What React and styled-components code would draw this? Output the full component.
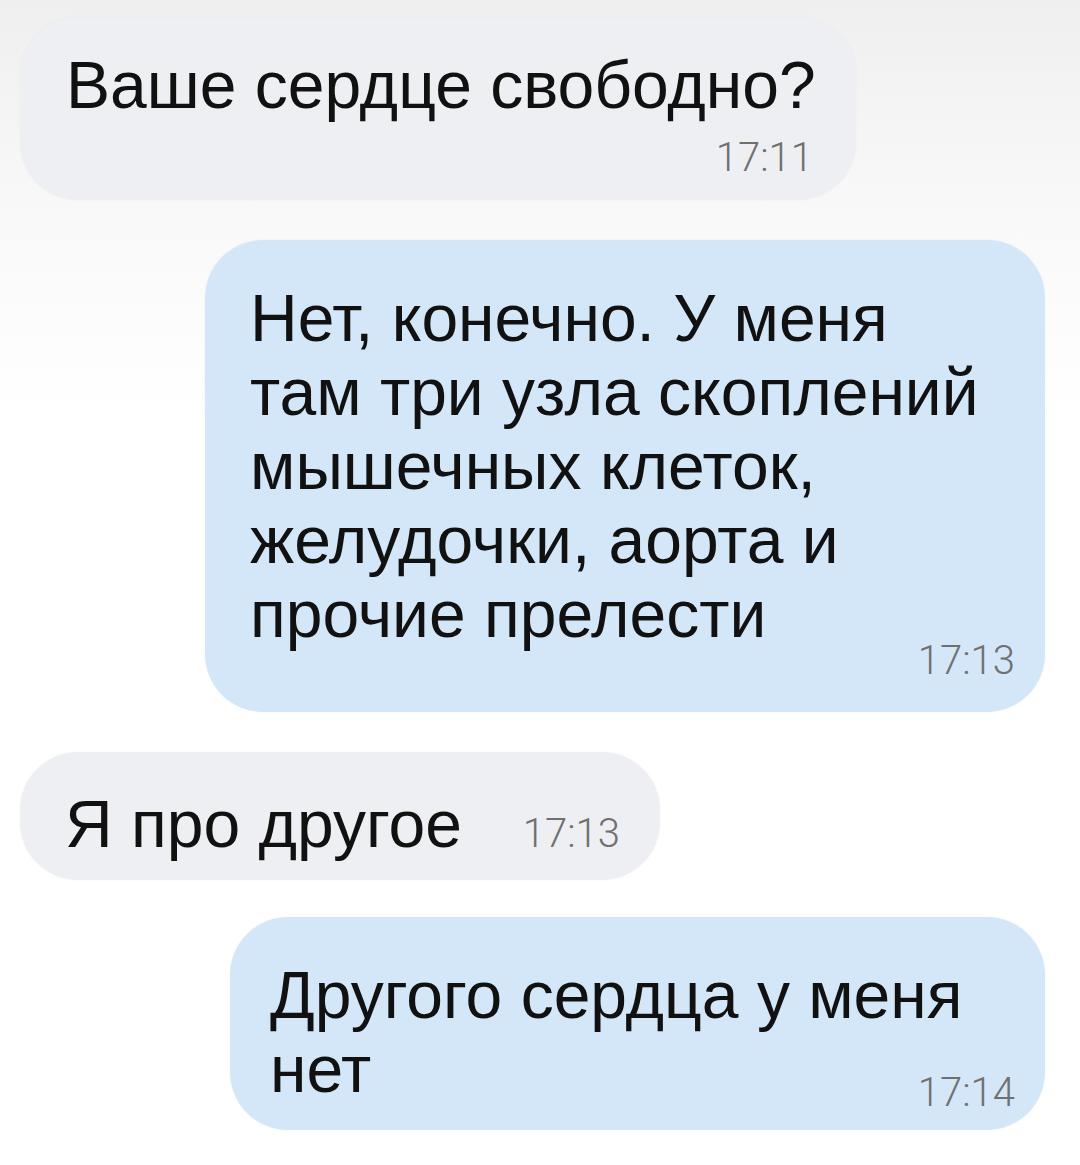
import React from 'react'
import styled, { createGlobalStyle } from 'styled-components'

const GlobalStyle = createGlobalStyle`
  body {
    margin: 0;
    background: #fff;
    font-family: "Liberation Sans", Arial, sans-serif;
  }
`

const Chat = styled.div`
  min-height: 1165px;
  box-sizing: border-box;
  padding: 17px 35px 0 20px;
  display: flex;
  flex-direction: column;
  background: linear-gradient(180deg, #efefef 0px, #f9f9f9 220px, #fff 420px);
`

const Bubble = styled.div`
  align-self: ${({ $out }) => ($out ? 'flex-end' : 'flex-start')};
  width: ${({ $width }) => $width}px;
  box-sizing: border-box;
  margin-top: ${({ $gap }) => $gap}px;
  padding: ${({ $pad }) => $pad};
  border-radius: 58px;
  background: ${({ $out }) => ($out ? '#d4e7f9' : '#eeeff2')};
  box-shadow: 0 0 3px rgba(0, 0, 0, 0.04);
`

const Line = styled.div`
  font-size: 66px;
  line-height: 74px;
  color: #111;
  white-space: nowrap;
`

const LastRow = styled.div`
  display: flex;
  justify-content: space-between;
  align-items: flex-end;
  gap: 40px;
`

const TimeRow = styled.div`
  display: flex;
  justify-content: flex-end;
  margin-top: 13px;
`

const Time = styled.span`
  font-family: Roboto, "Liberation Sans", sans-serif;
  font-weight: 300;
  font-size: 40px;
  line-height: 46px;
  color: #707070;
  margin-bottom: ${({ $drop }) => $drop || 0}px;
`

const messages = [
  {
    out: false,
    width: 836,
    gap: 0,
    pad: '31px 43px 19px 46px',
    lines: ['Ваше сердце свободно?'],
    time: '17:11',
    timeBelow: true,
  },
  {
    out: true,
    width: 840,
    gap: 40,
    pad: '41px 30px 61px 45px',
    lines: [
      'Нет, конечно. У меня',
      'там три узла скоплений',
      'мышечных клеток,',
      'желудочки, аорта и',
      'прочие прелести',
    ],
    time: '17:13',
    drop: -33,
  },
  {
    out: false,
    width: 640,
    gap: 40,
    pad: '35px 40px 19px 45px',
    lines: ['Я про другое'],
    time: '17:13',
    drop: 4,
  },
  {
    out: true,
    width: 815,
    gap: 37,
    pad: '41px 30px 24px 40px',
    lines: ['Другого сердца у меня', 'нет'],
    time: '17:14',
    drop: -10,
  },
]

function Message({ msg }) {
  const head = msg.lines.slice(0, -1)
  const last = msg.lines[msg.lines.length - 1]
  return (
    <Bubble $out={msg.out} $width={msg.width} $gap={msg.gap} $pad={msg.pad}>
      {head.map((l) => (
        <Line key={l}>{l}</Line>
      ))}
      {msg.timeBelow ? (
        <>
          <Line>{last}</Line>
          <TimeRow>
            <Time>{msg.time}</Time>
          </TimeRow>
        </>
      ) : (
        <LastRow>
          <Line>{last}</Line>
          <Time $drop={msg.drop}>{msg.time}</Time>
        </LastRow>
      )}
    </Bubble>
  )
}

export default function App() {
  return (
    <>
      <GlobalStyle />
      <Chat>
        {messages.map((m, i) => (
          <Message key={i} msg={m} />
        ))}
      </Chat>
    </>
  )
}
